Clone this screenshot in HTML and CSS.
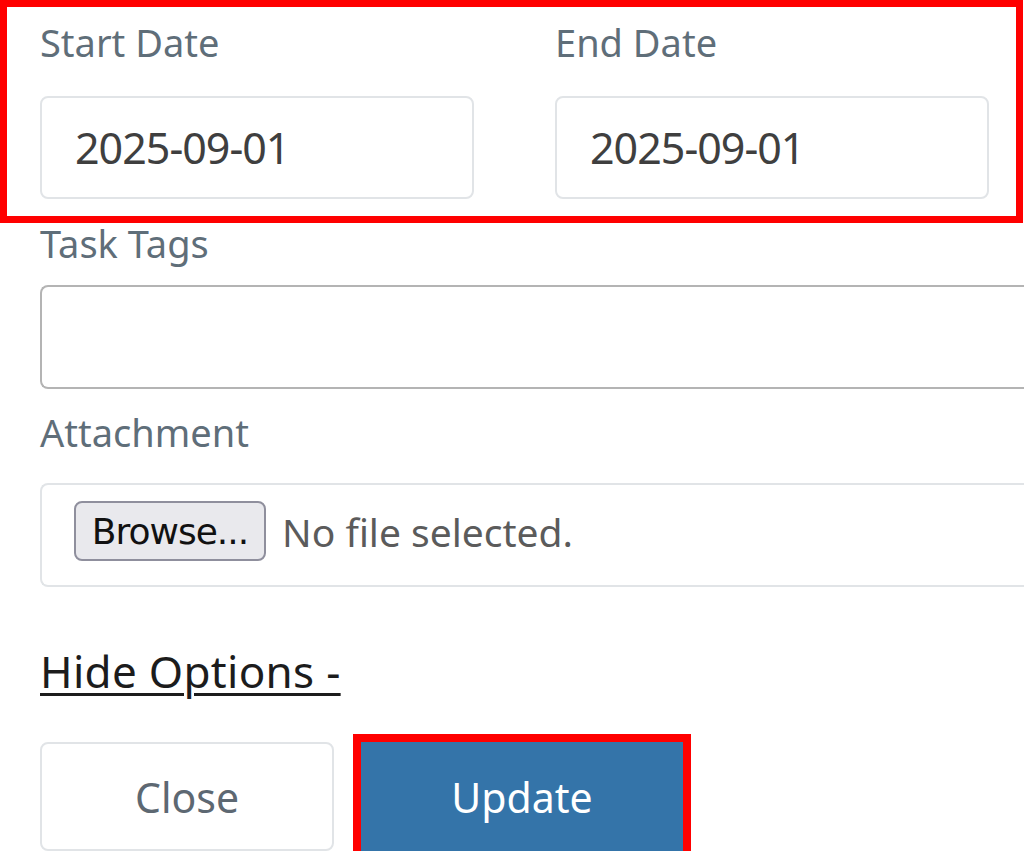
FILE: index.html
```html
<!DOCTYPE html>
<html lang="en">
<head>
    <meta charset="UTF-8">
    <meta name="viewport" content="width=device-width, initial-scale=1.0">
    <title>Edit Task</title>
    <link rel="stylesheet" href="styles.css">
</head>
<body>
    <div class="page">
        <div class="date-row">
            <div class="field">
                <label class="label" for="start-date">Start Date</label>
                <input class="date-input" id="start-date" type="text" value="2025-09-01">
            </div>
            <div class="field">
                <label class="label" for="end-date">End Date</label>
                <input class="date-input" id="end-date" type="text" value="2025-09-01">
            </div>
        </div>

        <div class="block">
            <label class="label tags-label" for="task-tags">Task Tags</label>
            <div class="tags-input" id="task-tags"></div>

            <label class="label attach-label">Attachment</label>
            <div class="file-input">
                <button class="browse">Browse...</button>
                <span class="file-name">No file selected.</span>
            </div>

            <a class="toggle" href="#">Hide Options -</a>

            <div class="actions">
                <button class="btn-close">Close</button>
                <button class="btn-update">Update</button>
            </div>
        </div>
    </div>
</body>
</html>
```

FILE: styles.css
```css
body {
    margin: 0;
    background: #fff;
    font-family: "Noto Sans", Arial, sans-serif;
    overflow: hidden;
}
.page {
    padding: 7px 0 0 7px;
}
.date-row {
    width: 1009px;
    box-sizing: border-box;
    padding: 12px 0 17px 33px;
    outline: 7px solid #ff0000;
    display: flex;
    gap: 81px;
}
.field {
    width: 434px;
    display: flex;
    flex-direction: column;
}
.label {
    display: block;
    font-size: 38px;
    line-height: 46px;
    color: #5f6e79;
}
.date-row .label {
    margin-bottom: 31px;
}
.date-input {
    box-sizing: border-box;
    width: 434px;
    height: 103px;
    border: 2px solid #e1e4e7;
    border-radius: 8px;
    padding: 0 0 0 33px;
    font-family: "Noto Sans", Arial, sans-serif;
    font-size: 43px;
    letter-spacing: -1px;
    color: #3f3f3f;
    background: #fff;
}

.block {
    padding-left: 33px;
}
.tags-label {
    margin-top: 4px;
    margin-bottom: 19px;
}
/* the wide inputs run on past the right edge of the shot */
.tags-input,
.file-input {
    box-sizing: border-box;
    width: 984px;
    height: 104px;
    border-radius: 8px 0 0 8px;
    border-right: none;
}
.tags-input {
    border: 2px solid #b4b4b4;
    border-right: none;
}
.attach-label {
    margin-top: 20px;
    margin-bottom: 28px;
}
.file-input {
    border: 2px solid #e1e4e7;
    border-right: none;
    padding: 0 0 8px 32px;
    display: flex;
    align-items: center;
    gap: 16px;
}
.browse {
    box-sizing: border-box;
    width: 192px;
    height: 60px;
    padding: 0;
    background: #e9e9ed;
    border: 2px solid #8f8f9d;
    border-radius: 8px;
    font-family: "DejaVu Sans", sans-serif;
    font-size: 36px;
    letter-spacing: -1px;
    color: #111;
}
.file-name {
    font-size: 39px;
    color: #5b5b5b;
}
.toggle {
    display: block;
    width: max-content;
    margin-top: 57px;
    font-size: 44px;
    line-height: 54px;
    letter-spacing: 0.3px;
    color: #1c1c1c;
    text-decoration: underline;
    text-decoration-thickness: 3px;
    text-underline-offset: 5px;
}
.actions {
    margin-top: 44px;
    display: flex;
    gap: 27px;
}
.actions button {
    box-sizing: border-box;
    height: 109px;
    font-family: "Noto Sans", Arial, sans-serif;
    font-size: 41px;
    border-radius: 8px;
    cursor: pointer;
}
.btn-close {
    width: 294px;
    background: #fff;
    border: 2px solid #e1e4e7;
    color: #5d6872;
}
.btn-update {
    width: 322px;
    background: #3474a9;
    border: none;
    border-radius: 0 !important;
    color: #fff;
    outline: 8px solid #ff0000;
}
```
